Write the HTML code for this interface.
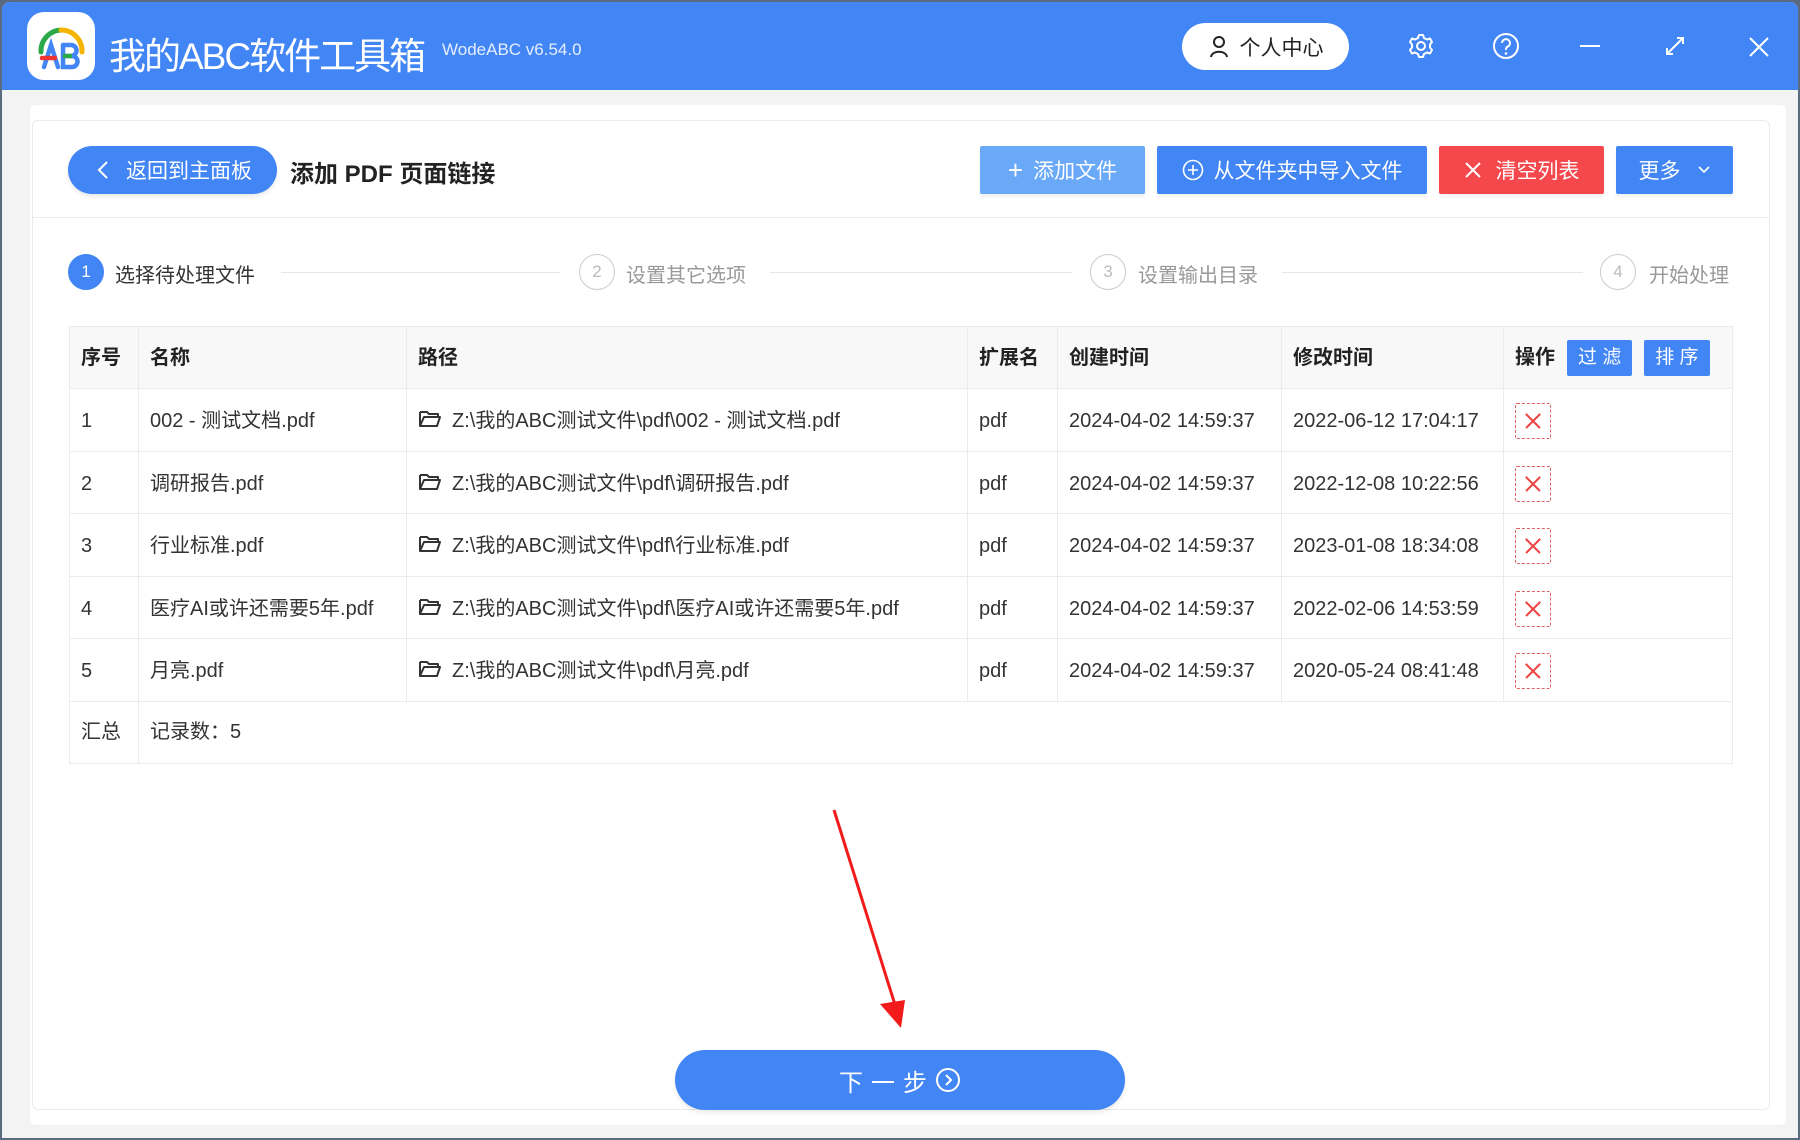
<!DOCTYPE html>
<html><head><meta charset="utf-8">
<style>
*{margin:0;padding:0;box-sizing:border-box}
body{width:1800px;height:1140px;background:#5a6b80;font-family:"Liberation Sans","Noto Sans CJK SC",sans-serif;position:relative;overflow:hidden;color:#333}
.win{position:absolute;left:2px;top:2px;width:1796px;height:1136px;background:#f3f3f3;border-radius:8px 8px 0 0;overflow:hidden}
.hdr{position:absolute;left:0;top:0;width:1796px;height:88px;background:#4285f4}
.abs{position:absolute}
.t{color:#fff;white-space:nowrap}
.card{position:absolute;left:28px;top:103px;width:1756px;height:1020px;background:#fff;border-radius:6px}
.panel{position:absolute;left:32px;top:120px;width:1738px;height:990px;border:1px solid #ebebeb;border-radius:6px;background:#fff}
.btn{position:absolute;top:146px;height:48px;color:#fff;font-size:21px;display:flex;align-items:center;justify-content:center;border-radius:2px;box-shadow:0 3px 3px rgba(0,0,0,.06)}
.step{position:absolute;top:254px;width:36px;height:36px;border-radius:50%;border:1.5px solid #ccc;color:#bbb;font-size:17px;display:flex;align-items:center;justify-content:center}
.stxt{position:absolute;top:259px;font-size:20px;color:#999;white-space:nowrap}
.line{position:absolute;top:272px;height:1px;background:#e6e6e6}
table{position:absolute;left:69px;top:326px;border-collapse:collapse;font-size:20px;color:#333}
td,th{border:1px solid #ebebeb;padding:0 0 0 11px;text-align:left;white-space:nowrap;line-height:24px;vertical-align:middle}
th{background:#f8f8f9;font-weight:bold;height:62px;color:#222}
td{height:62.5px;padding-top:3px}
.del{display:inline-block;width:36px;height:36px;border:1.5px dashed #e06060;position:relative;vertical-align:middle;border-radius:2px}
.del:before,.del:after{content:"";position:absolute;left:7px;top:16px;width:20px;height:1.6px;background:#e44}
.del:before{transform:rotate(45deg)}.del:after{transform:rotate(-45deg)}
.sb{display:inline-block;background:#4285f4;color:#fff;font-weight:normal;font-size:19px;padding:0 11px;height:36px;line-height:36px;border-radius:2px;margin-left:12px;vertical-align:middle}
.fd{display:inline-block;vertical-align:-2px;margin-right:10px}
</style></head><body>
<div class="win">
<div class="hdr">
 <div class="abs" style="left:25px;top:10px;width:68px;height:68px;background:#fff;border-radius:17px">
  <svg width="68" height="68" viewBox="0 0 68 68">
   <path d="M14 40 A21 21 0 0 1 34 18" stroke="#2aa84a" stroke-width="5" fill="none" stroke-linecap="round"/>
   <path d="M34 18 A21 21 0 0 1 55 40" stroke="#f4b400" stroke-width="5" fill="none" stroke-linecap="round"/>
   <path d="M17 55 L24 33 L31 55" stroke="#4285f4" stroke-width="4.5" fill="none" stroke-linecap="round"/>
   <path d="M15 46 L28 46" stroke="#e33" stroke-width="4.5" stroke-linecap="round"/>
   <path d="M36 33 L36 55 L45 55 A5.5 5.5 0 0 0 45 44 L36 44 M36 33 L44 33 A5 5 0 0 1 44 44" stroke="#4285f4" stroke-width="4.5" fill="none" stroke-linecap="round"/>
   <path d="M36 44 L45 44" stroke="#2aa84a" stroke-width="4.5"/>
  </svg>
 </div>
 <div class="abs t" style="left:107px;top:24px;font-size:37px;letter-spacing:-2px">我的ABC软件工具箱</div>
 <div class="abs t" style="left:440px;top:38px;font-size:17px;color:#e5eeff">WodeABC v6.54.0</div>
 <div class="abs" style="left:1180px;top:21px;width:167px;height:47px;background:#fff;border-radius:24px;display:flex;align-items:center;justify-content:center;font-size:21px;color:#222">
  <svg width="22" height="24" viewBox="0 0 22 24" style="margin-right:10px"><circle cx="11" cy="7" r="5" stroke="#222" stroke-width="2" fill="none"/><path d="M3 22 C4 15 18 15 19 22" stroke="#222" stroke-width="2" fill="none"/></svg>个人中心</div>
 <svg class="abs" style="left:1405px;top:30px" width="28" height="28" viewBox="0 0 28 28"><circle cx="14" cy="14" r="4" stroke="#fff" stroke-width="2" fill="none"/><path d="M12 3h4l1 3 3 1.5 3-1 2 3.5-2 2.5v3l2 2.5-2 3.5-3-1-3 1.5-1 3h-4l-1-3-3-1.5-3 1-2-3.5 2-2.5v-3l-2-2.5 2-3.5 3 1 3-1.5z" stroke="#fff" stroke-width="2" fill="none" stroke-linejoin="round"/></svg>
 <svg class="abs" style="left:1490px;top:30px" width="28" height="28" viewBox="0 0 28 28"><circle cx="14" cy="14" r="12" stroke="#fff" stroke-width="2" fill="none"/><path d="M10 11a4 4 0 1 1 5 4c-1 .5-1 1.5-1 3" stroke="#fff" stroke-width="2" fill="none"/><circle cx="14" cy="21.5" r="1.3" fill="#fff"/></svg>
 <div class="abs" style="left:1578px;top:43px;width:20px;height:2px;background:#fff"></div>
 <svg class="abs" style="left:1662px;top:33px" width="22" height="22" viewBox="0 0 22 22"><path d="M3 19L19 3M13 3h6v6M3 13v6h6" stroke="#fff" stroke-width="2" fill="none"/></svg>
 <svg class="abs" style="left:1746px;top:34px" width="22" height="22" viewBox="0 0 22 22"><path d="M2 2L20 20M20 2L2 20" stroke="#fff" stroke-width="2"/></svg>
</div>
<div class="card"></div>
</div>
<div class="panel"></div>
<div class="abs" style="left:33px;top:217px;width:1736px;height:1px;background:#ebebeb"></div>
<div class="abs" style="left:68px;top:146px;width:209px;height:48px;background:#4285f4;border-radius:24px;color:#fff;font-size:21px;display:flex;align-items:center;box-shadow:0 3px 4px rgba(0,0,0,.08)">
 <svg width="14" height="20" viewBox="0 0 14 20" style="margin-left:28px;margin-right:16px"><path d="M11 2L3 10l8 8" stroke="#fff" stroke-width="2" fill="none"/></svg>返回到主面板</div>
<div class="abs" style="left:290px;top:154px;font-size:24px;font-weight:bold;color:#222;white-space:nowrap">添加 PDF 页面链接</div>
<div class="btn" style="left:980px;width:165px;background:#6aa8f8"><span style="font-size:26px;margin-right:10px;font-weight:300">+</span>添加文件</div>
<div class="btn" style="left:1157px;width:270px;background:#4285f4"><svg width="22" height="22" viewBox="0 0 22 22" style="margin-right:10px"><circle cx="11" cy="11" r="9.5" stroke="#fff" stroke-width="1.6" fill="none"/><path d="M11 6v10M6 11h10" stroke="#fff" stroke-width="1.6"/></svg>从文件夹中导入文件</div>
<div class="btn" style="left:1439px;width:165px;background:#f5484d"><svg width="18" height="18" viewBox="0 0 18 18" style="margin-right:14px"><path d="M2 2l14 14M16 2L2 16" stroke="#fff" stroke-width="2"/></svg>清空列表</div>
<div class="btn" style="left:1616px;width:117px;background:#4285f4">更多<svg width="14" height="10" viewBox="0 0 14 10" style="margin-left:16px"><path d="M2 2l5 5 5-5" stroke="#fff" stroke-width="1.6" fill="none"/></svg></div>

<div class="step" style="left:68px;background:#4285f4;border-color:#4285f4;color:#fff">1</div>
<div class="stxt" style="left:115px;color:#333">选择待处理文件</div>
<div class="line" style="left:281px;width:279px"></div>
<div class="step" style="left:579px">2</div>
<div class="stxt" style="left:626px">设置其它选项</div>
<div class="line" style="left:770px;width:302px"></div>
<div class="step" style="left:1090px">3</div>
<div class="stxt" style="left:1138px">设置输出目录</div>
<div class="line" style="left:1282px;width:301px"></div>
<div class="step" style="left:1600px">4</div>
<div class="stxt" style="left:1649px">开始处理</div>

<table>
<colgroup><col style="width:69px"><col style="width:268px"><col style="width:561px"><col style="width:90px"><col style="width:224px"><col style="width:222px"><col style="width:229px"></colgroup>
<tr><th>序号</th><th>名称</th><th>路径</th><th style="padding-left:11px">扩展名</th><th>创建时间</th><th>修改时间</th><th>操作<span class="sb">过 滤</span><span class="sb">排 序</span></th></tr>
<tr><td>1</td><td>002 - 测试文档.pdf</td><td><svg class="fd" width="24" height="20" viewBox="0 0 24 20"><path d="M2 3h7l2 2h9v3M2 3v14h17l3-9H6L2 17" stroke="#333" stroke-width="2" fill="none" stroke-linejoin="round"/></svg>Z:\我的ABC测试文件\pdf\002 - 测试文档.pdf</td><td>pdf</td><td>2024-04-02 14:59:37</td><td>2022-06-12 17:04:17</td><td><span class="del"></span></td></tr>
<tr><td>2</td><td>调研报告.pdf</td><td><svg class="fd" width="24" height="20" viewBox="0 0 24 20"><path d="M2 3h7l2 2h9v3M2 3v14h17l3-9H6L2 17" stroke="#333" stroke-width="2" fill="none" stroke-linejoin="round"/></svg>Z:\我的ABC测试文件\pdf\调研报告.pdf</td><td>pdf</td><td>2024-04-02 14:59:37</td><td>2022-12-08 10:22:56</td><td><span class="del"></span></td></tr>
<tr><td>3</td><td>行业标准.pdf</td><td><svg class="fd" width="24" height="20" viewBox="0 0 24 20"><path d="M2 3h7l2 2h9v3M2 3v14h17l3-9H6L2 17" stroke="#333" stroke-width="2" fill="none" stroke-linejoin="round"/></svg>Z:\我的ABC测试文件\pdf\行业标准.pdf</td><td>pdf</td><td>2024-04-02 14:59:37</td><td>2023-01-08 18:34:08</td><td><span class="del"></span></td></tr>
<tr><td>4</td><td>医疗AI或许还需要5年.pdf</td><td><svg class="fd" width="24" height="20" viewBox="0 0 24 20"><path d="M2 3h7l2 2h9v3M2 3v14h17l3-9H6L2 17" stroke="#333" stroke-width="2" fill="none" stroke-linejoin="round"/></svg>Z:\我的ABC测试文件\pdf\医疗AI或许还需要5年.pdf</td><td>pdf</td><td>2024-04-02 14:59:37</td><td>2022-02-06 14:53:59</td><td><span class="del"></span></td></tr>
<tr><td>5</td><td>月亮.pdf</td><td><svg class="fd" width="24" height="20" viewBox="0 0 24 20"><path d="M2 3h7l2 2h9v3M2 3v14h17l3-9H6L2 17" stroke="#333" stroke-width="2" fill="none" stroke-linejoin="round"/></svg>Z:\我的ABC测试文件\pdf\月亮.pdf</td><td>pdf</td><td>2024-04-02 14:59:37</td><td>2020-05-24 08:41:48</td><td><span class="del"></span></td></tr>
<tr><td style="height:58px;padding-top:0">汇总</td><td colspan="6" style="border-left:1px solid #ebebeb;padding-top:0">记录数：5</td></tr>
</table>

<svg class="abs" style="left:0;top:0" width="1800" height="1140"><path d="M834 810 L896 1008" stroke="#f21b1b" stroke-width="3"/><path d="M880 1004 L901 1028 L905 1000 Z" fill="#f21b1b"/></svg>

<div class="abs" style="left:675px;top:1050px;width:450px;height:60px;background:#4285f4;border-radius:30px;color:#fff;font-size:24px;display:flex;align-items:center;justify-content:center;letter-spacing:8px;box-shadow:0 3px 4px rgba(0,0,0,.08)">下一步<svg width="26" height="26" viewBox="0 0 26 26"><circle cx="13" cy="13" r="11" stroke="#fff" stroke-width="2" fill="none"/><path d="M11 8l5 5-5 5" stroke="#fff" stroke-width="2" fill="none"/></svg></div>
</body></html>
